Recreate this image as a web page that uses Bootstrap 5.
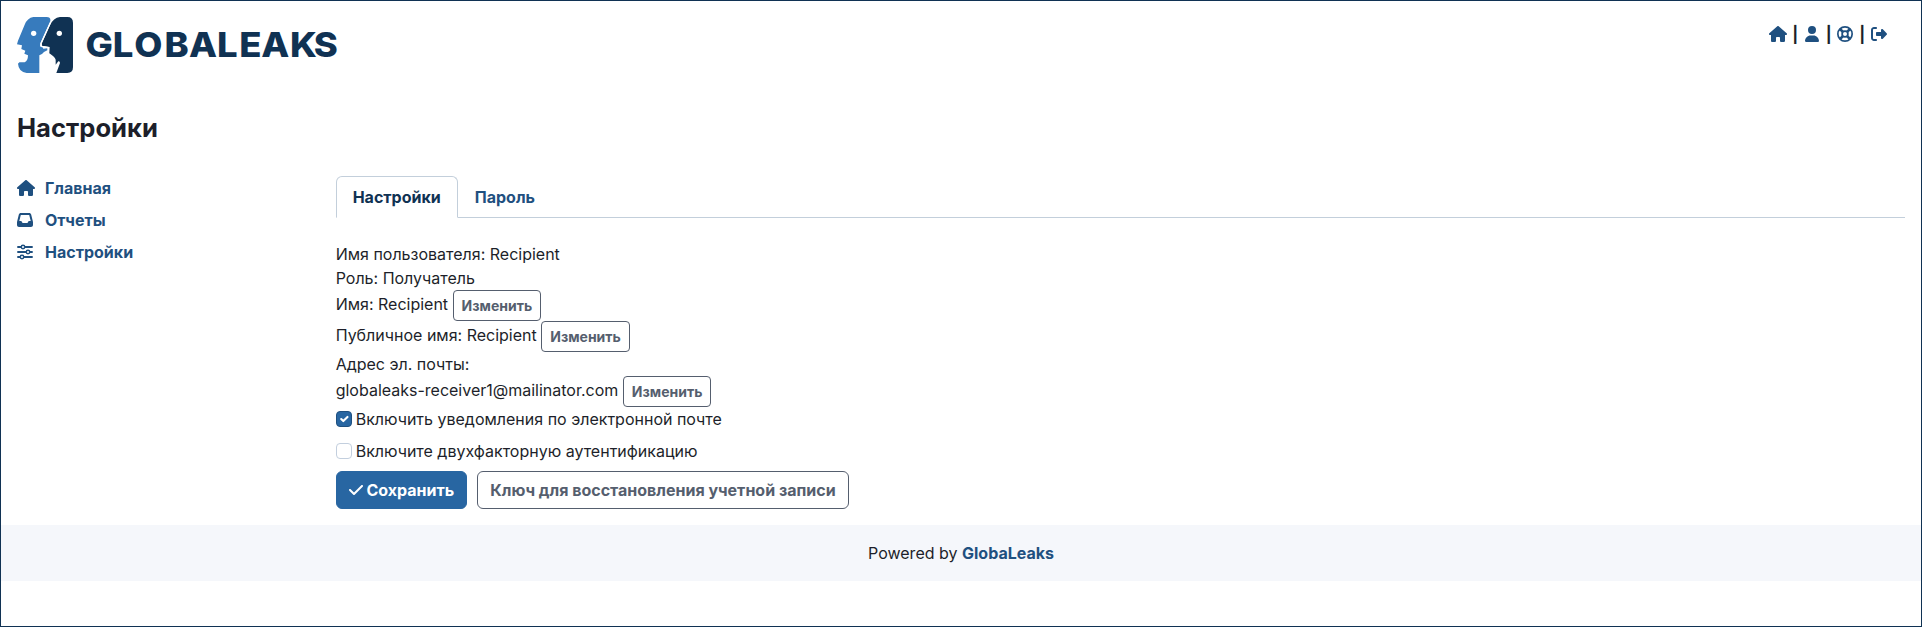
<!DOCTYPE html>
<html lang="ru">
<head>
<meta charset="utf-8">
<meta name="viewport" content="width=device-width, initial-scale=1">
<title>GlobaLeaks</title>
<link href="https://cdn.jsdelivr.net/npm/bootstrap@5.3.0/dist/css/bootstrap.min.css" rel="stylesheet">
<style>
:root{--navy:#103253;--link:#1f5080;--brand:#2866a2}
body{font-family:Inter,"Liberation Sans",sans-serif;font-size:16px;line-height:1.5;color:#1d1f2a;background:#fff}
.page-frame{min-height:100vh;border:1px solid var(--navy)}
a{color:var(--link);font-weight:700;text-decoration:none}
.fa-ico{height:16px;width:auto;fill:currentColor;display:inline-block;vertical-align:-2px}
.top-links{font-weight:700;padding:5px 16px 0 0}
.top-links .fa-ico{width:20px}
.brand-logo{display:block;width:324px;height:56px}
.main-area{padding-top:40px}
.page-title{font-size:25.6px;font-weight:700;line-height:1.2;margin:0 0 32px}
.side-links{margin-top:-4px}
.side-links a{display:flex;align-items:center;height:32px}
.side-links .ico-slot{width:28px;display:flex}
.nav-tabs{--bs-nav-tabs-border-color:#c3cfdb;--bs-nav-tabs-link-active-border-color:#c3cfdb #c3cfdb #fff;--bs-nav-tabs-link-active-color:var(--navy);--bs-nav-link-color:var(--link)}
.nav-tabs .nav-link{font-weight:700}
.btn{font-weight:700}
.btn-outline-secondary{--bs-btn-color:#555e6e;--bs-btn-border-color:#555e6e}
.btn-primary{--bs-btn-bg:var(--brand);--bs-btn-border-color:var(--brand)}
.action-row{gap:10px}
.form-check-input{margin-top:0;border-color:#c3cfde}
.form-check-input:checked{background-color:var(--brand);border-color:#1f5080}
.check-line{height:24px;display:flex;align-items:center;gap:4px}
.foot-bar{background:#f5f7fb;height:56px}
</style>
</head>
<body>
<div class="page-frame">
  <header class="d-flex justify-content-between px-3 pt-3 pb-0">
    <svg class="brand-logo" viewBox="0 0 324 56" role="img" aria-label="GLOBALEAKS">
      <g transform="translate(-3 -3) scale(.3333)">
        <path fill="#377bbd" d="M58 9H98Q113 10 108 24L79 88 78 97 86 100 88 104 100 103 100 109 90 114 84 120 76 124V177H38Q14 174 12 149L16 145H32Q42 140 42 124L31 119 34 110 22 105 24 94 9 91 12 80 32 32Q40 12 58 9Z"/>
        <path fill="#103253" d="M138 9H160Q177 9 177 26V160Q177 177 160 177H127L138 147Q138 141 133 142L125 152V137Q122 128 106 118L107 99 84 95 83 88 108 34Q118 11 138 9Z"/>
        <path fill="none" stroke="#fff" stroke-width="4" d="M109 26 81 89 82 97 104 101"/>
        <circle cx="59" cy="58" r="8" fill="#fff"/><circle cx="136" cy="58" r="8" fill="#fff"/>
      </g>
      <text transform="scale(1.06 1)" y="40.2" x="64.6 90.4 110.5 139.2 162.2 188.7 209.8 230.5 257.6 280" font-family="Inter,sans-serif" font-weight="800" font-size="34.4" fill="#103253">GLOBALEAKS</text>
    </svg>
    <div class="top-links">
      <a href="#"><svg class="fa-ico" viewBox="0 0 576 512"><use href="#i-house"/></svg></a> | <a href="#"><svg class="fa-ico" viewBox="0 0 448 512"><path d="M224 256A128 128 0 1 0 224 0a128 128 0 1 0 0 256zm-45.7 48C79.8 304 0 383.8 0 482.3C0 498.7 13.3 512 29.7 512l388.6 0c16.4 0 29.7-13.3 29.7-29.7C448 383.8 368.2 304 269.7 304l-91.4 0z"/></svg></a> | <a href="#"><svg class="fa-ico" viewBox="0 0 512 512"><g fill="none" stroke="currentColor"><circle cx="256" cy="256" r="229" stroke-width="54"/><circle cx="256" cy="256" r="92" stroke-width="56"/><path stroke-width="84" d="M95 95 198 198M314 314 417 417M417 95 314 198M198 314 95 417"/></g></svg></a> | <a href="#"><svg class="fa-ico" viewBox="0 0 512 512"><path d="M377.9 105.9L500.7 228.7c7.2 7.2 11.3 17.1 11.3 27.3s-4.1 20.1-11.3 27.3L377.9 406.1c-6.4 6.4-15 9.9-24 9.9c-18.7 0-33.9-15.2-33.9-33.9l0-62.1-128 0c-17.7 0-32-14.3-32-32l0-64c0-17.7 14.3-32 32-32l128 0 0-62.1c0-18.7 15.2-33.9 33.9-33.9c9 0 17.6 3.6 24 9.9zM160 96L96 96c-17.7 0-32 14.3-32 32l0 256c0 17.7 14.3 32 32 32l64 0c17.7 0 32 14.3 32 32s-14.3 32-32 32l-64 0c-53 0-96-43-96-96L0 128C0 75 43 32 96 32l64 0c17.7 0 32 14.3 32 32s-14.3 32-32 32z"/></svg></a>
    </div>
  </header>

  <svg width="0" height="0" class="d-none"><defs><path id="i-house" d="M575.8 255.5c0 18-15 32.1-32 32.1l-32 0 .7 160.2c0 2.7-.2 5.4-.5 8.1l0 16.2c0 22.1-17.9 40-40 40l-16 0c-1.1 0-2.2 0-3.3-.1c-1.4 .1-2.8 .1-4.2 .1L416 512l-24 0c-22.1 0-40-17.9-40-40l0-24 0-64c0-17.7-14.3-32-32-32l-64 0c-17.7 0-32 14.3-32 32l0 64 0 24c0 22.1-17.9 40-40 40l-24 0-31.9 0c-1.5 0-3-.1-4.5-.2c-1.2 .1-2.4 .2-3.6 .2l-16 0c-22.1 0-40-17.9-40-40l0-112c0-.9 0-1.9 .1-2.8l0-69.7-32 0c-18 0-32-14-32-32.1c0-9 3-17 10-24L266.4 8c7-7 15-8 22-8s15 2 21 7L564.8 231.5c8 7 12 15 11 24z"/></defs></svg>

  <main class="main-area px-3">
    <h1 class="page-title">Настройки</h1>
    <div class="row">
      <nav class="col-2 side-links">
        <a href="#"><span class="ico-slot"><svg class="fa-ico" viewBox="0 0 576 512"><use href="#i-house"/></svg></span>Главная</a>
        <a href="#"><span class="ico-slot"><svg class="fa-ico" viewBox="0 0 512 512"><path d="M121 32C91.6 32 66 52 58.9 80.5L1.9 308.4C.6 313.5 0 318.7 0 323.9L0 416c0 35.3 28.7 64 64 64l384 0c35.3 0 64-28.7 64-64l0-92.1c0-5.2-.6-10.4-1.9-15.5l-57-227.9C446 52 420.4 32 391 32L121 32zm0 64l270 0 48 192-51.2 0c-12.1 0-23.2 6.8-28.6 17.7l-14.3 28.6c-5.4 10.8-16.5 17.7-28.6 17.7l-120.4 0c-12.1 0-23.2-6.8-28.6-17.7l-14.3-28.6c-5.4-10.8-16.5-17.7-28.6-17.7L73 288 121 96z"/></svg></span>Отчеты</a>
        <a href="#"><span class="ico-slot"><svg class="fa-ico" viewBox="0 0 512 512"><g fill="none" stroke="currentColor" stroke-width="58" stroke-linecap="round"><path d="M31 96H130M254 96H481M31 256H290M414 256H481M31 416H98M222 416H481"/><circle cx="192" cy="96" r="56" stroke-width="46"/><circle cx="352" cy="256" r="56" stroke-width="46"/><circle cx="160" cy="416" r="56" stroke-width="46"/></g></svg></span>Настройки</a>
      </nav>
      <div class="col-10">
        <ul class="nav nav-tabs mb-4">
          <li class="nav-item"><a class="nav-link active" href="#">Настройки</a></li>
          <li class="nav-item"><a class="nav-link" href="#">Пароль</a></li>
        </ul>
        <div>Имя пользователя: Recipient</div>
        <div>Роль: Получатель</div>
        <div>Имя: Recipient <button class="btn btn-sm btn-outline-secondary">Изменить</button></div>
        <div>Публичное имя: Recipient <button class="btn btn-sm btn-outline-secondary">Изменить</button></div>
        <div>Адрес эл. почты:</div>
        <div>globaleaks-receiver1@mailinator.com <button class="btn btn-sm btn-outline-secondary">Изменить</button></div>
        <label class="check-line mb-2"><input class="form-check-input" type="checkbox" checked>Включить уведомления по электронной почте</label>
        <label class="check-line mb-2"><input class="form-check-input" type="checkbox">Включите двухфакторную аутентификацию</label>
        <div class="action-row d-flex mb-3">
          <button class="btn btn-primary"><svg class="fa-ico" viewBox="0 0 448 512"><path d="M438.6 105.4c12.5 12.5 12.5 32.8 0 45.3l-256 256c-12.5 12.5-32.8 12.5-45.3 0l-128-128c-12.5-12.5-12.5-32.8 0-45.3s32.8-12.5 45.3 0L160 338.7 393.4 105.4c12.5-12.5 32.8-12.5 45.3 0z"/></svg> Сохранить</button>
          <button class="btn btn-outline-secondary">Ключ для восстановления учетной записи</button>
        </div>
      </div>
    </div>
  </main>
  <footer class="foot-bar d-flex align-items-center justify-content-center"><div>Powered by <a href="#">GlobaLeaks</a></div></footer>
</div>
<script src="https://cdn.jsdelivr.net/npm/bootstrap@5.3.0/dist/js/bootstrap.bundle.min.js"></script>
</body>
</html>
